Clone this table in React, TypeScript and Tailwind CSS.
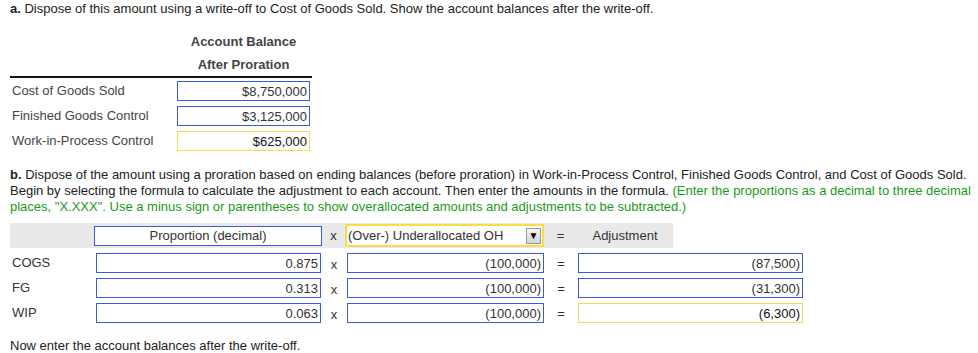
import React from "react";

const font = { fontFamily: '"Liberation Sans", Arial, Helvetica, sans-serif' };

function Box({ value, tone = "blue", className = "" }: { value?: string; tone?: "blue" | "yellow"; className?: string }) {
  const border = tone === "blue" ? "border-[#3b5bd6]" : "border-[#f7dd4a]";
  return (
    <div
      className={`flex h-[20px] items-center justify-end border bg-white pr-[2px] text-[13px] leading-none ${border} ${className} ${
        tone === "yellow" ? "text-[#111]" : "text-[#333]"
      }`}
    >
      {value}
    </div>
  );
}

const balances = [
  { label: "Cost of Goods Sold", value: "$8,750,000", tone: "blue" as const },
  { label: "Finished Goods Control", value: "$3,125,000", tone: "blue" as const },
  { label: "Work-in-Process Control", value: "$625,000", tone: "yellow" as const },
];

const rows = [
  { label: "COGS", prop: "0.875", oh: "(100,000)", adj: "(87,500)", tone: "blue" as const },
  { label: "FG", prop: "0.313", oh: "(100,000)", adj: "(31,300)", tone: "blue" as const },
  { label: "WIP", prop: "0.063", oh: "(100,000)", adj: "(6,300)", tone: "yellow" as const },
];

export default function App() {
  return (
    <div className="h-[353px] w-[978px] bg-white pl-[10px] pt-[1px] text-[13px] leading-[16px] text-[#222]" style={font}>
      <p>
        <b>a.</b> Dispose of this amount using a write-off to Cost of Goods Sold. Show the account balances after the write-off.
      </p>

      {/* write-off balances */}
      <div className="mt-[12px] w-[302px]">
        <div className="ml-[167px] w-[133px] text-center font-bold text-[#444]">
          <div className="leading-[25px]">Account Balance</div>
          <div className="leading-[21px]">After Proration</div>
        </div>
        <div className="mt-[1px] border-t-2 border-[#111]" />
        <div className="mt-[3px] flex flex-col gap-[5px]">
          {balances.map((b) => (
            <div key={b.label} className="flex items-center">
              <span className="w-[167px] pl-[2px] text-[#444]">{b.label}</span>
              <Box value={b.value} tone={b.tone} className="w-[133px]" />
            </div>
          ))}
        </div>
      </div>

      <p className="mt-[16px] w-[962px]">
        <b>b.</b> Dispose of the amount using a proration based on ending balances (before proration) in Work-in-Process Control, Finished Goods
        Control, and Cost of Goods Sold. Begin by selecting the formula to calculate the adjustment to each account. Then enter the amounts in the
        formula. <span className="text-[#1a9a1a]">(Enter the proportions as a decimal to three decimal places, "X.XXX". Use a minus sign or parentheses to show overallocated amounts and adjustments to be subtracted.)</span>
      </p>

      {/* proration formula */}
      <div className="mt-[8px]">
        <div className="flex h-[25px] w-[663px] items-center bg-[#e9e9e9] text-[#333]">
          <div className="ml-[84px] flex h-[20px] w-[228px] items-center justify-center border border-[#3b5bd6] bg-white">Proportion (decimal)</div>
          <span className="w-[23px] text-center">x</span>
          <div className="flex h-[23px] w-[199px] items-center justify-between border-2 border-[#f7dd4a] bg-white pl-[1px] pr-[1px]">
            <span>(Over-) Underallocated OH</span>
            <span className="flex h-[16px] w-[15px] items-center justify-center border border-[#999] bg-gradient-to-b from-[#f6f6f6] to-[#d4d4d4] text-[10px] leading-none text-black">
              ▼
            </span>
          </div>
          <span className="w-[33px] text-center">=</span>
          <span className="w-[96px] text-center">Adjustment</span>
        </div>

        <div className="mt-[5px] flex flex-col gap-[5px] text-[#333]">
          {rows.map((r) => (
            <div key={r.label} className="flex items-center">
              <span className="w-[86px] pl-[2px]">{r.label}</span>
              <Box value={r.prop} className="w-[225px]" />
              <span className="w-[26px] pt-[3px] text-center">x</span>
              <Box value={r.oh} className="w-[197px]" />
              <span className="w-[34px] pt-[2px] text-center">=</span>
              <Box value={r.adj} tone={r.tone} className="w-[225px]" />
            </div>
          ))}
        </div>
      </div>

      <p className="mt-[15px] text-[#222]">Now enter the account balances after the write-off.</p>
    </div>
  );
}
